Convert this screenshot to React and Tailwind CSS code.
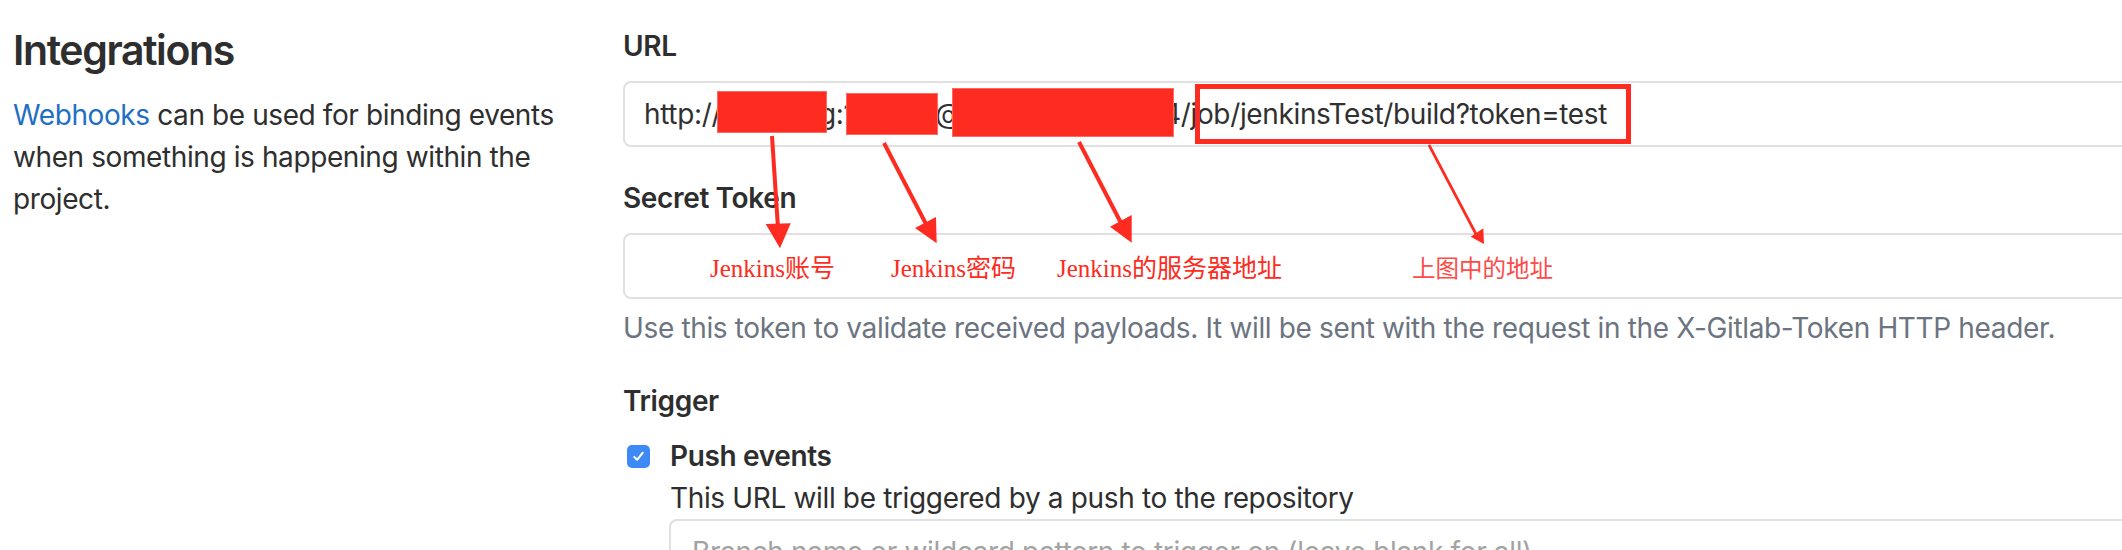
import React from "react";

const sans = { fontFamily: 'Inter, "Noto Sans", "Noto Sans CJK SC", sans-serif' };
const serifCjk = { fontFamily: '"Liberation Serif", "Noto Sans CJK SC", serif' };

function Redact({ className }) {
  return <div className={"absolute bg-[#fd2b20] border border-[#ff6a60] " + className} />;
}

export default function App() {
  return (
    <div className="relative w-[2122px] h-[550px] overflow-hidden bg-white" style={sans}>
      <div className="flex">
        {/* Left column */}
        <div className="w-[623px] shrink-0 pl-[13px] pt-[25px]">
          <h4 className="text-[41px] leading-[50px] font-semibold text-[#2e2e2e] tracking-[-1.4px]">Integrations</h4>
          <p className="mt-[19px] text-[28px] leading-[42px] text-[#2e2e2e] tracking-[-0.4px]">
            <span className="text-[#1f6fc4]">Webhooks</span> can be used for binding events
            <br />
            when something is happening within the
            <br />
            project.
          </p>
        </div>

        {/* Right column */}
        <div className="flex-1 min-w-0 -mr-[60px] pt-[25px] text-[#2e2e2e] tracking-[-0.35px]">
          <div className="text-[28px] leading-[42px] font-semibold">URL</div>
          <div className="mt-[14px] h-[66px] rounded-[8px] border-2 border-[#e0e0e0] flex items-center pl-[19px] text-[28px] text-[#303030] whitespace-nowrap">
            <span className="inline-block w-[174px] shrink-0">http://</span>
            <span className="inline-block w-[117px] shrink-0 pl-[1px]">g:1</span>
            <span className="inline-block w-[228px] shrink-0">@</span>
            <span>4/job/jenkinsTest/build?token=test</span>
          </div>

          <div className="mt-[30px] text-[28px] leading-[42px] font-semibold">Secret Token</div>
          <div className="mt-[14px] h-[66px] rounded-[8px] border-2 border-[#e0e0e0]" />
          <p className="mt-[8px] text-[28px] leading-[42px] text-[#6b7480] whitespace-nowrap">
            Use this token to validate received payloads. It will be sent with the request in the X-Gitlab-Token HTTP header.
          </p>

          <div className="mt-[31px] text-[28px] leading-[42px] font-semibold">Trigger</div>
          <div className="mt-[13px] flex items-center h-[42px]">
            <div className="ml-[4px] w-[23px] h-[23px] rounded-[5px] bg-[#3d8af7] flex items-center justify-center">
              <svg width="15" height="15" viewBox="0 0 16 16" fill="none">
                <path d="M3.5 8.5 L6.5 11.5 L12.5 4" stroke="white" strokeWidth="2.2" strokeLinecap="round" strokeLinejoin="round" />
              </svg>
            </div>
            <span className="ml-[20px] text-[28px] leading-[42px] font-semibold">Push events</span>
          </div>
          <div className="pl-[47px] text-[28px] leading-[42px]">This URL will be triggered by a push to the repository</div>
          <div className="ml-[46px] h-[66px] rounded-[8px] border-2 border-[#e0e0e0] flex items-center pl-[21px] text-[28px] text-[#a3a3a3] whitespace-nowrap">
            Branch name or wildcard pattern to trigger on (leave blank for all)
          </div>
        </div>
      </div>

      {/* Annotation overlays */}
      <Redact className="left-[717px] top-[91px] w-[110px] h-[42px]" />
      <Redact className="left-[846px] top-[93px] w-[92px] h-[42px]" />
      <Redact className="left-[952px] top-[88px] w-[222px] h-[49px]" />
      <div className="absolute left-[1195px] top-[84px] w-[436px] h-[60px] border-[5px] border-[#fd2b20]" />

      <svg className="absolute left-0 top-0 pointer-events-none" width="2122" height="550" viewBox="0 0 2122 550">
        <g stroke="#fd2b20" strokeWidth="4" fill="none">
          <line x1="772" y1="136" x2="778" y2="228" />
          <line x1="884" y1="143" x2="926" y2="224" />
          <line x1="1079" y1="142" x2="1121" y2="223" />
        </g>
        <line x1="1429" y1="145" x2="1477" y2="236" stroke="#fd2b20" strokeWidth="2.7" />
        <g fill="#fd2b20">
          <polygon points="765.7,224 790.7,223.3 780,248.3" />
          <polygon points="915,228 936,217 936.7,243.3" />
          <polygon points="1110,226.7 1131.7,215 1131.7,242.7" />
          <polygon points="1470.7,236.7 1483.3,228.3 1484,244" />
        </g>
      </svg>

      <div className="absolute left-[710px] top-[255px] text-[25px] leading-[28px] text-[#fd2b20] whitespace-nowrap" style={serifCjk}>Jenkins账号</div>
      <div className="absolute left-[891px] top-[255px] text-[25px] leading-[28px] text-[#fd2b20] whitespace-nowrap" style={serifCjk}>Jenkins密码</div>
      <div className="absolute left-[1057px] top-[255px] text-[25px] leading-[28px] text-[#fd2b20] whitespace-nowrap" style={serifCjk}>Jenkins的服务器地址</div>
      <div className="absolute left-[1412px] top-[253px] text-[23.5px] leading-[28px] text-[#ff4a48] whitespace-nowrap" style={{ fontFamily: '"Noto Sans CJK SC", sans-serif' }}>上图中的地址</div>
    </div>
  );
}
